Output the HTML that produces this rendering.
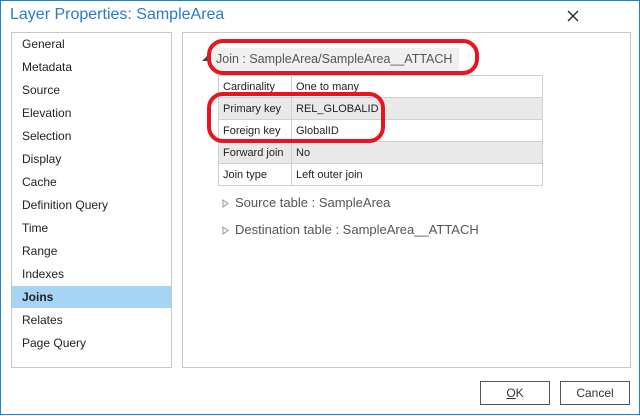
<!DOCTYPE html><html><head><style>
body{margin:0;width:640px;height:415px;overflow:hidden;font-family:"Liberation Sans",sans-serif;}
.win{position:absolute;left:0;top:0;width:638px;height:413px;border:1px solid #1883d7;background:#fff;}
.t{position:absolute;left:9px;top:5px;font-size:16px;color:#2a7bc4;}
.list{position:absolute;left:10px;top:31px;width:159px;height:334px;border:1px solid #c8c8c8;}
.it{position:absolute;left:0;width:159px;height:22px;font-size:12px;line-height:22px;color:#222;padding-left:10px;box-sizing:border-box;}
.sel{background:#a6d4f5;font-weight:bold;}
.panel{position:absolute;left:181px;top:31px;width:447px;height:334px;border:1px solid #c8c8c8;}
.hd{position:absolute;left:212px;top:47px;width:246px;height:22px;background:#f0f0f0;font-size:12.5px;line-height:22px;color:#555;padding-left:3px;box-sizing:border-box;white-space:nowrap;overflow:hidden;}
table{position:absolute;left:217px;top:74px;width:325px;border-collapse:collapse;font-size:11px;color:#222;}
td{border:1px solid #d0d0d0;height:21px;padding:0 4px;white-space:nowrap;}
tr.g td{background:#e9e9e9;}
.s{position:absolute;font-size:13px;color:#555;white-space:nowrap;}
.btn{position:absolute;top:380px;width:68px;height:22px;border:1px solid #555;font-size:12px;line-height:22px;text-align:center;color:#333;}
</style></head><body><div class="win">
<div class="t">Layer Properties: SampleArea</div>
<svg style="position:absolute;left:566px;top:9px" width="12" height="12"><path d="M1 1L11 11M11 1L1 11" stroke="#222" stroke-width="1.3"/></svg>
<div class="list">
<div class="it" style="top:0">General</div>
<div class="it" style="top:23px">Metadata</div>
<div class="it" style="top:46px">Source</div>
<div class="it" style="top:69px">Elevation</div>
<div class="it" style="top:92px">Selection</div>
<div class="it" style="top:115px">Display</div>
<div class="it" style="top:138px">Cache</div>
<div class="it" style="top:161px">Definition Query</div>
<div class="it" style="top:184px">Time</div>
<div class="it" style="top:207px">Range</div>
<div class="it" style="top:230px">Indexes</div>
<div class="it sel" style="top:253px">Joins</div>
<div class="it" style="top:276px">Relates</div>
<div class="it" style="top:299px">Page Query</div>
</div>
<div class="panel"></div>
<svg style="position:absolute;left:200px;top:53px" width="8" height="8"><path d="M7 1L7 7L1 7Z" fill="#444"/></svg>
<div class="hd">Join : SampleArea/SampleArea__ATTACH</div>
<table>
<tr><td style="width:64px">Cardinality</td><td>One to many</td></tr>
<tr class="g"><td>Primary key</td><td>REL_GLOBALID</td></tr>
<tr><td>Foreign key</td><td>GlobalID</td></tr>
<tr class="g"><td>Forward join</td><td>No</td></tr>
<tr><td>Join type</td><td>Left outer join</td></tr>
</table>
<svg style="position:absolute;left:221px;top:198px" width="7" height="9"><path d="M1 1L6 4.5L1 8Z" fill="none" stroke="#999"/></svg>
<div class="s" style="left:234px;top:194px">Source table : SampleArea</div>
<svg style="position:absolute;left:221px;top:225px" width="7" height="9"><path d="M1 1L6 4.5L1 8Z" fill="none" stroke="#999"/></svg>
<div class="s" style="left:234px;top:221px">Destination table : SampleArea__ATTACH</div>
<svg style="position:absolute;left:0;top:0" width="640" height="415"><rect x="208" y="40" width="268" height="32" rx="14" fill="none" stroke="#e8141e" stroke-width="4"/><rect x="208" y="93" width="174" height="47" rx="14" fill="none" stroke="#e8141e" stroke-width="4"/></svg>
<div class="btn" style="left:479px"><u>O</u>K</div>
<div class="btn" style="left:559px">Cancel</div>
</div></body></html>
